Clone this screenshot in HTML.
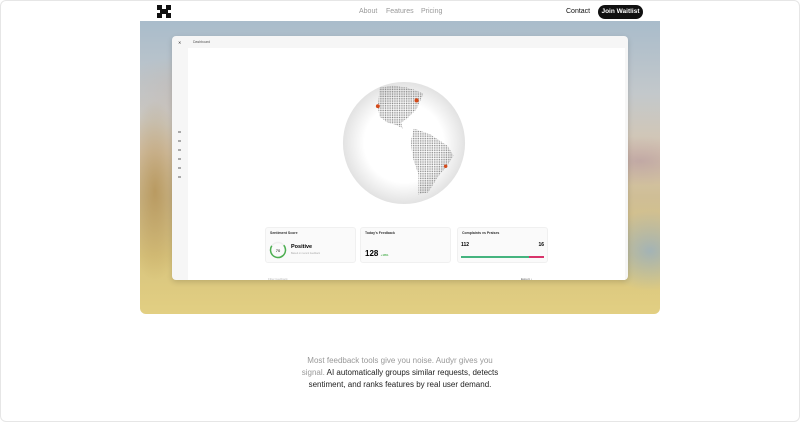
<!DOCTYPE html>
<html><head><meta charset="utf-8"><style>
*{margin:0;padding:0;box-sizing:border-box}
body{width:800px;height:422px;background:#fff;font-family:"Liberation Sans",sans-serif;position:relative;overflow:hidden}
.frame{position:absolute;left:0;top:0;width:800px;height:422px;border:1px solid #e6e6e6;border-radius:6px}
.logo{position:absolute;left:157px;top:5px}
.nav{position:absolute;top:8px;font-size:7px;color:#999}
.contact{position:absolute;left:566px;top:8px;font-size:7px;color:#111}
.btn{position:absolute;left:598px;top:5px;width:45px;height:14px;background:#111;border-radius:8px;color:#fff;font-size:6.5px;font-weight:bold;text-align:center;line-height:14px}
.hero{position:absolute;left:140px;top:21px;width:520px;height:293px;border-radius:0 0 6px 6px;overflow:hidden;
background:
radial-gradient(ellipse 30px 90px at 15px 170px,rgba(170,130,60,.6),transparent),
radial-gradient(ellipse 60px 25px at 500px 140px,rgba(180,150,160,.6),transparent),
radial-gradient(ellipse 50px 40px at 510px 230px,rgba(150,175,195,.8),transparent),
radial-gradient(ellipse 120px 40px at 90px 70px,rgba(200,170,150,.5),transparent),
linear-gradient(180deg,#a9bccb 0%,#c3c8cb 25%,#d6c6b0 45%,#cfbe96 60%,#d8c47e 80%,#e2cf82 100%)}
.win{position:absolute;left:172px;top:36px;width:456px;height:244px;background:#f6f6f6;border-radius:4px;box-shadow:0 2px 6px rgba(0,0,0,.15);overflow:hidden;z-index:2}
.inner{position:absolute;left:16px;top:12px;right:3px;bottom:0;background:#fff}
.title{position:absolute;left:21px;top:4px;font-size:3.5px;color:#555}
.card{position:absolute;top:179px;width:91px;height:36px;background:#fafafa;border-radius:3px;border:1px solid #f0f0f0}
.ct{font-size:3.5px;color:#333;font-weight:bold;position:absolute;left:4px;top:3px}
.text{position:absolute;left:0;width:800px;top:355px;text-align:center;font-size:8px;line-height:12px;color:#222}
.text span{color:#999}
</style></head><body>
<div class="frame"></div>
<svg class="logo" width="14" height="13" viewBox="0 0 14 13"><g fill="#111"><rect x="0" y="0" width="5" height="5"/><rect x="9" y="0" width="5" height="5"/><rect x="0" y="8" width="5" height="5"/><rect x="9" y="8" width="5" height="5"/><rect x="3" y="4" width="8" height="5"/></g></svg>
<div class="nav" style="left:359px">About</div>
<div class="nav" style="left:386px">Features</div>
<div class="nav" style="left:421px">Pricing</div>
<div class="contact">Contact</div>
<div class="btn">Join Waitlist</div>
<div class="hero"></div>
<div class="win">
<div style="position:absolute;left:6px;top:4px;font-size:4px;color:#333">✕</div>
<div class="title">Dashboard</div>
<div style="position:absolute;left:6px;top:95px;width:3px;height:50px;background:repeating-linear-gradient(180deg,#aaa 0 2px,transparent 2px 9px)"></div>
<div class="inner">
<svg style="position:absolute;left:153px;top:32px" width="126" height="126" viewBox="0 0 130 130">
<defs><radialGradient id="g" cx="50%" cy="50%" r="50%"><stop offset="65%" stop-color="#fff"/><stop offset="100%" stop-color="#e2e2e2"/></radialGradient>
<pattern id="d" width="1.8" height="1.8" patternUnits="userSpaceOnUse"><circle cx=".9" cy=".9" r=".55" fill="#777"/></pattern></defs>
<circle cx="65" cy="65" r="63" fill="url(#g)"/>
<path d="M40 8 Q60 2 85 14 L78 30 L68 40 L62 44 L64 50 L56 46 L48 44 L40 38 L38 28 Z" fill="url(#d)"/>
<path d="M75 50 L92 56 L110 68 L116 78 L110 88 L100 100 L90 116 L80 118 L80 98 L74 80 L72 64 Z" fill="url(#d)"/>
<circle cx="38" cy="27" r="2" fill="#d44a1a"/><circle cx="78" cy="21" r="2.2" fill="#d44a1a"/><circle cx="108" cy="89" r="1.8" fill="#d44a1a"/>
</svg>
<div class="card" style="left:77px"><div class="ct">Sentiment Score</div>
<svg style="position:absolute;left:3px;top:13px" width="18" height="18"><circle cx="9" cy="9" r="7.5" fill="none" stroke="#eee" stroke-width="1.5"/><circle cx="9" cy="9" r="7.5" fill="none" stroke="#4caf50" stroke-width="1.5" stroke-dasharray="33 47" transform="rotate(-40 9 9)"/><text x="9" y="11" font-size="4" text-anchor="middle" font-family="Liberation Sans">70</text></svg>
<div style="position:absolute;left:25px;top:16px;font-size:5.5px;font-weight:bold">Positive</div>
<div style="position:absolute;left:25px;top:24px;font-size:2.5px;color:#aaa">Based on recent feedback</div></div>
<div class="card" style="left:172px"><div class="ct">Today's Feedback</div>
<div style="position:absolute;left:4px;top:21px;font-size:8px;font-weight:bold">128 <span style="font-size:3px;color:#4caf50">+18%</span></div></div>
<div class="card" style="left:269px"><div class="ct">Complaints vs Praises</div>
<div style="position:absolute;left:3px;top:14px;font-size:5px;font-weight:bold">112</div>
<div style="position:absolute;right:3px;top:14px;font-size:5px;font-weight:bold">16</div>
<div style="position:absolute;left:3px;top:28px;width:68px;height:2px;background:#45b47f"></div>
<div style="position:absolute;left:71px;top:28px;width:15px;height:2px;background:#d8336a"></div></div>
<div style="position:absolute;left:80px;top:229px;font-size:3px;color:#bbb">Filter feedback</div>
<div style="position:absolute;left:333px;top:229px;font-size:3px;color:#555">Export ↓</div>
</div></div>
<div class="text"><span>Most feedback tools give you noise. Audyr gives you<br>signal.</span> AI automatically groups similar requests, detects<br>sentiment, and ranks features by real user demand.</div>
</body></html>
